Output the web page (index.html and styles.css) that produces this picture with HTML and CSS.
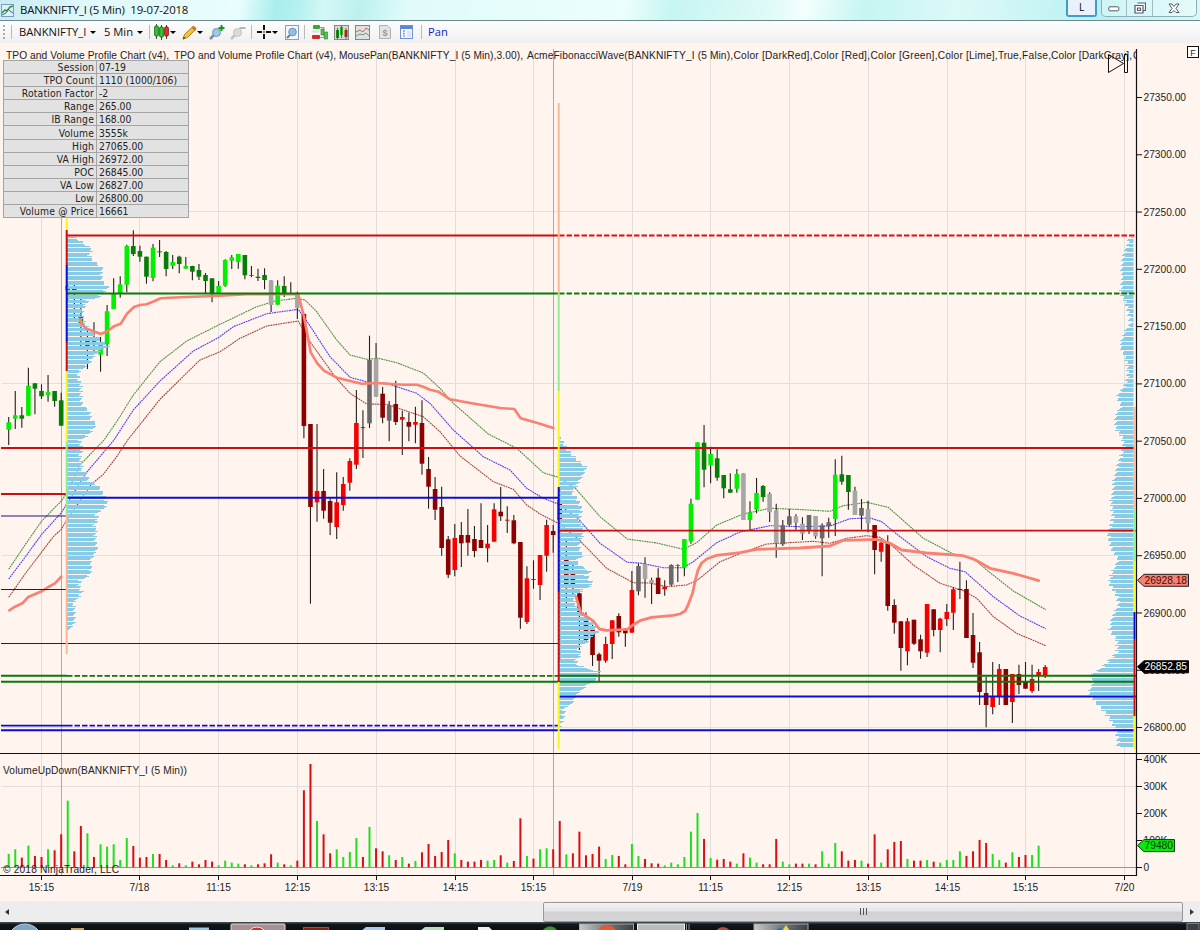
FILE: index.html
```html
<!DOCTYPE html>
<html lang="en">
<head>
    <meta charset="UTF-8">
    <title>BANKNIFTY_I (5 Min) 19-07-2018</title>
    <link rel="stylesheet" href="styles.css">
</head>
<body>
    <div class="titlebar">
        <svg class="app-icon" width="13" height="13" viewBox="0 0 13 13">
            <rect x=".5" y=".5" width="12" height="12" fill="#dfeef8" stroke="#7d9bbb"/>
            <path d="M1 9l3-3 2 1 3-4 3-1" fill="none" stroke="#2b9a3d" stroke-width="1.5"/>
            <path d="M1 11l4-2 2-4 2 2 3 2" fill="none" stroke="#3767b0"/>
        </svg>
        <span class="title">BANKNIFTY_I (5 Min)&nbsp; 19-07-2018</span>
        <span class="link-btn">L</span>
        <div class="win-buttons">
            <span class="wb min"><svg width="12" height="6"><rect x=".8" y=".8" width="10" height="4" rx="1" fill="#fff" stroke="#555b66"/></svg></span>
            <span class="wb max"><svg width="12" height="12"><path d="M3.500 1h8v7.500h-2M1 3.500h8v7.500h-8zM3.500 6h3v2.500h-3z" fill="#fff" stroke="#555b66" stroke-width="1.200"/></svg></span>
            <span class="wb close"><svg width="12" height="11"><path d="M1 1h3l2 2.500 2-2.500h3l-3 4.500 3 4h-3l-2-2-2 2h-3l3-4z" fill="#fff" stroke="#555b66"/></svg></span>
        </div>
    </div>

    <div class="toolbar">
        <span class="grip"></span>
        <span class="sep s1"></span>
        <span class="tool-text instrument">BANKNIFTY_I</span>
        <i class="caret c1"></i>
        <span class="tool-text interval">5 Min</span>
        <i class="caret c2"></i>
        <span class="sep s2"></span>
        <svg class="ic i1" width="15" height="16" viewBox="0 0 15 16">
            <path d="M2.500 0v15M7.500 1v15M12.500 1v14" stroke="#444"/>
            <rect x=".7" y="2" width="3.600" height="10" rx="1" fill="#35c931" stroke="#157615"/>
            <rect x="5.700" y="3" width="3.600" height="10" rx="1" fill="#35c931" stroke="#157615"/>
            <rect x="10.700" y="3" width="3.600" height="9" rx="1" fill="#e5382c" stroke="#8c1913"/>
        </svg>
        <i class="caret c3"></i>
        <svg class="ic i2" width="15" height="15" viewBox="0 0 15 15">
            <path d="M1 14l1.500-4.500L11 1.500l3 2.500-8.500 8.500z" fill="#f5c634" stroke="#a97b13"/>
            <path d="M10 2.500l3 3M1 14l1-2 1 1z" stroke="#7b5a20"/>
            <path d="M11 1.500l3 2.500" stroke="#d26a67" stroke-width="2"/>
        </svg>
        <i class="caret c4"></i>
        <svg class="ic i3" width="16" height="15" viewBox="0 0 16 15">
            <path d="M1 14l4-4" stroke="#7c8ba0" stroke-width="2.500"/>
            <circle cx="7.500" cy="7.500" r="4" fill="#9ccae8" stroke="#7693af"/>
            <path d="M12.500 0v6M9.500 3h6" stroke="#169324" stroke-width="2"/>
        </svg>
        <svg class="ic i4" width="16" height="15" viewBox="0 0 16 15">
            <path d="M1 14l4-4" stroke="#c2c2c2" stroke-width="2.500"/>
            <circle cx="7.500" cy="7.500" r="4" fill="#dadada" stroke="#c3c3c3"/>
            <path d="M9.500 3h6" stroke="#b3b3b3" stroke-width="2"/>
        </svg>
        <span class="sep s3"></span>
        <svg class="ic i5" width="14" height="14" viewBox="0 0 14 14">
            <path d="M7 0v5M7 9v5M0 7h5M9 7h5M6.500 7h1" stroke="#111" stroke-width="2"/>
        </svg>
        <i class="caret c5"></i>
        <svg class="ic i6" width="14" height="15" viewBox="0 0 14 15">
            <rect x=".5" y=".5" width="13" height="14" fill="#f4f7fb" stroke="#8e9cb4"/>
            <path d="M2 13l3-3" stroke="#6b7b90" stroke-width="2"/>
            <circle cx="7.500" cy="7" r="3.800" fill="#93c1e3" stroke="#6c8fb4"/>
        </svg>
        <span class="sep s4"></span>
        <svg class="ic i7" width="16" height="15" viewBox="0 0 16 15">
            <path d="M7 2.500h5v3M0 12.500h12v-3" fill="none" stroke="#9a9a9a"/>
            <rect x="1" y="0" width="7" height="4" rx="1" fill="#39a935"/>
            <rect x="0" y="5.500" width="7" height="2" rx="1" fill="#ddd"/>
            <rect x="0" y="10" width="8" height="4" rx="1" fill="#cc2f2b"/>
            <rect x="9" y="4" width="3" height="6" fill="#53c545" stroke="#2b7c2a" stroke-width=".6"/>
            <rect x="12.500" y="7" width="3" height="7" fill="#53c545" stroke="#2b7c2a" stroke-width=".6"/>
        </svg>
        <svg class="ic i8" width="15" height="15" viewBox="0 0 15 15">
            <rect x=".5" y=".5" width="14" height="14" fill="#d5dad2" stroke="#868686"/>
            <rect x="2" y="5" width="3" height="8" fill="#238c23"/>
            <rect x="6" y="2" width="3" height="8" fill="#35b931"/>
            <rect x="10.500" y="5" width="3" height="7" fill="#bd2a22"/>
            <path d="M3.500 3v11M7.500 1v12M12 3v11" stroke="#333" stroke-width=".7"/>
        </svg>
        <svg class="ic i9" width="15" height="15" viewBox="0 0 15 15">
            <rect x=".5" y=".5" width="14" height="14" fill="#dde3de" stroke="#868686"/>
            <path d="M1 7l4-2 3 2 3-4 3 2" fill="none" stroke="#c86464"/>
            <path d="M1 11l4-2 3 1 3-2 3 3" fill="none" stroke="#5f9c70"/>
        </svg>
        <svg class="ic i10" width="12" height="14" viewBox="0 0 12 14">
            <path d="M.5.500h8l3 3v10H.5z" fill="#e4e4e4" stroke="#b0b0b0"/>
            <text x="6" y="11" class="dollar">$</text>
        </svg>
        <svg class="ic i11" width="13" height="14" viewBox="0 0 13 14">
            <rect x=".5" y=".5" width="12" height="13" fill="#f3f7ff" stroke="#6f8fd0"/>
            <path d="M1 2.500h11" stroke="#5b84d8" stroke-width="3"/>
            <path d="M3 6h2M3 8.500h2M3 11h2" stroke="#7e9cdc" stroke-width="1.400"/>
            <path d="M7 6h4v6H7z" fill="#d8e4fb"/>
        </svg>
        <span class="sep s5"></span>
        <span class="tool-text pan">Pan</span>
    </div>

    <div class="chart">
        <svg id="plot" width="1200" height="858" viewBox="0 43 1200 858"></svg>
        <table class="session-box">
            <tr><th>Session</th><td>07-19</td></tr>
            <tr><th>TPO Count</th><td>1110 (1000/106)</td></tr>
            <tr><th>Rotation Factor</th><td>-2</td></tr>
            <tr><th>Range</th><td>265.00</td></tr>
            <tr><th>IB Range</th><td>168.00</td></tr>
            <tr><th>Volume</th><td>3555k</td></tr>
            <tr><th>High</th><td>27065.00</td></tr>
            <tr><th>VA High</th><td>26972.00</td></tr>
            <tr><th>POC</th><td>26845.00</td></tr>
            <tr><th>VA Low</th><td>26827.00</td></tr>
            <tr><th>Low</th><td>26800.00</td></tr>
            <tr><th>Volume @ Price</th><td>16661</td></tr>
        </table>
    </div>

    <div class="scrollbar">
        <i class="arrow left"></i>
        <div class="thumb"><i></i><i></i><i></i></div>
        <i class="arrow right"></i>
    </div>

    <div class="taskbar">
        <svg width="1200" height="8" viewBox="0 922 1200 8">
            <defs>
                <linearGradient id="btn" x1="0" x2="1"><stop offset="0" stop-color="#c9c9cc"/><stop offset=".5" stop-color="#77797e"/><stop offset="1" stop-color="#3c4046"/></linearGradient>
            </defs>
            <circle cx="25" cy="941" r="17" fill="#7fa6c6" stroke="#b9d1e2"/>
            <rect x="71" y="928" width="13" height="3" fill="#d9a05c"/>
            <rect x="189" y="927.500" width="20" height="3" fill="#9cc8e8"/>
            <rect x="231" y="924" width="54" height="8" rx="1" fill="#a98f92" stroke="#e4dcdc"/>
            <circle cx="257" cy="937" r="10" fill="#d6302d" stroke="#f5dcdc"/>
            <rect x="303.500" y="927.500" width="25" height="6" fill="#8c1b10" stroke="#d63b20"/>
            <path d="M361 931l5-4h19v4z" fill="#a9ccf2"/>
            <path d="M420 931l5-4h19v4z" fill="#b5dfb4"/>
            <path d="M478 931v-4h11l4 4z" fill="#eee"/>
            <circle cx="550" cy="935" r="8.500" fill="#2f9c2b" stroke="#205f1d" stroke-dasharray="2 2"/>
            <rect x="579.500" y="924" width="54" height="8" fill="url(#btn)" stroke="#aaa"/>
            <circle cx="607" cy="935" r="10" fill="#ec5530"/>
            <rect x="637.500" y="924" width="47" height="8" fill="#b9bbbd" stroke="#eee"/>
            <path d="M686.500 924v6M689 924v6" stroke="#8a8d91"/>
            <circle cx="723" cy="936" r="9" fill="#c74242"/>
            <rect x="754" y="924" width="54" height="8" fill="url(#btn)" stroke="#aaa"/>
            <path d="M775 931l5-3.500 5 3.500z" fill="#2b6bc0"/>
            <path d="M782 931l4-6 4 6z" fill="#f2d73b"/>
            <rect x="1187" y="923.500" width="12" height="8" fill="#3a3f46" stroke="#7b8087"/>
        </svg>
    </div>
    <script src="chart.js"></script>
</body>
</html>
```

FILE: styles.css
```css
body {
    margin: 0;
    width: 1200px;
    height: 930px;
    overflow: hidden;
    background-color: #fff4ee;
    font-family: "Open Sans", "Noto Sans", sans-serif;
}

.titlebar {
    display: flex;
    align-items: center;
    box-sizing: border-box;
    height: 21px;
    border-bottom: 1px solid #6d8b8d;
    background: linear-gradient(100deg, #c9eaf2 0, #dff8fb 7%, #e9fdfd 20%, #a9eeee 23%, #b5f1ef 25%, #d3f8f6 27%, #bdf1ee 30%, #e0fbfa 34%, #ecfefd 52%, #c7f5f1 56%, #dffaf8 64%, #f3fffe 67%, #c6f5f2 72%, #dcf9f8 80%, #b9f0f2 92%, #d8f9f8 100%);
}

.app-icon {
    margin: 0 6px 0 1px;
}

.title {
    width: 1046px;
    font-size: 11.4px;
    letter-spacing: -0.16px;
    line-height: 20px;
    color: #111;
    white-space: nowrap;
}

.link-btn {
    box-sizing: border-box;
    align-self: flex-start;
    width: 31px;
    height: 17px;
    border: 2px solid #3f9ccb;
    border-top: 0;
    border-radius: 0 0 3px 3px;
    background-color: #e9f2fb;
    font-size: 10px;
    line-height: 15px;
    text-align: center;
}

.win-buttons {
    display: flex;
    align-self: flex-start;
    box-sizing: border-box;
    width: 96px;
    height: 17px;
    margin-left: 4px;
    border: 1px solid #8fb0b4;
    border-top: 0;
    border-radius: 0 0 5px 5px;
    background-color: rgba(255, 255, 255, 0.35);
}

.wb {
    display: flex;
    align-items: center;
    justify-content: center;
    width: 25px;
}

.wb.min {
    border-right: 1px solid #9fbcc0;
    padding-top: 2px;
}

.wb.max {
    border-right: 1px solid #9fbcc0;
}

.wb.close {
    width: 44px;
}

.toolbar {
    display: flex;
    align-items: center;
    height: 22px;
    background: linear-gradient(#fdfdfd, #f0f0f1);
}

.grip {
    width: 2px;
    height: 14px;
    margin-left: 3px;
    background: repeating-linear-gradient(#aaa 0 2px, transparent 2px 4px);
}

.sep {
    width: 1px;
    height: 14px;
    background-color: #bbb;
}

.tool-text {
    font-size: 11.2px;
    line-height: 20px;
    color: #111;
    white-space: nowrap;
}

.caret {
    border: 3px solid transparent;
    border-top-color: #000;
    border-bottom: 0;
}

.ic {
    flex: none;
}

.s1 { margin-left: 6px; }
.instrument { margin-left: 7px; width: 67px; }
.c1 { margin-left: 4px; }
.interval { margin-left: 8px; width: 29px; }
.c2 { margin-left: 4px; }
.s2 { margin-left: 6px; }
.i1 { margin-left: 4px; }
.c3 { margin-left: 1px; }
.i2 { margin-left: 6px; }
.c4 { margin-left: 0; }
.i3 { margin-left: 6px; }
.i4 { margin-left: 5px; }
.s3 { margin-left: 5px; }
.i5 { margin-left: 5px; }
.c5 { margin-left: 1px; }
.i6 { margin-left: 7px; }
.s4 { margin-left: 5px; }
.i7 { margin-left: 7px; }
.i8 { margin-left: 6px; }
.i9 { margin-left: 6px; }
.i10 { margin-left: 9px; }
.i11 { margin-left: 9px; }
.s5 { margin-left: 8px; }
.pan { margin-left: 6px; color: #1818d0; }

.dollar {
    font: bold 9px "Liberation Sans", sans-serif;
    text-anchor: middle;
    fill: #999;
}

.chart {
    position: relative;
    height: 858px;
}

#plot {
    display: block;
    font-family: "Liberation Sans", Arial, sans-serif;
    font-size: 10.2px;
    fill: #222;
}

/* info box lies over the price pane */
.session-box {
    position: absolute;
    left: 3px;
    top: 17px;
    width: 186px;
    border-collapse: collapse;
    table-layout: fixed;
    background-color: #e2e2e2;
    font-family: "DejaVu Sans Condensed", "DejaVu Sans", sans-serif;
    font-stretch: condensed;
    font-size: 10.3px;
    line-height: 12px;
    color: #222;
}

.session-box th,
.session-box td {
    height: 12.1px;
    padding: 0 2px;
    border: 1px solid #a4a4a4;
    font-weight: normal;
    white-space: nowrap;
}

.session-box th {
    width: 88px;
    text-align: right;
    letter-spacing: 0.15px;
}

.session-box td {
    text-align: left;
}

.scrollbar {
    display: flex;
    align-items: center;
    height: 21px;
    background-color: #ededed;
}

.arrow {
    border: 3px solid transparent;
}

.arrow.left {
    margin-left: 2px;
    border-right: 4px solid #333;
}

.arrow.right {
    margin-left: 7px;
    border-left: 4px solid #333;
}

.thumb {
    display: flex;
    align-items: center;
    justify-content: center;
    gap: 2px;
    box-sizing: border-box;
    width: 640px;
    height: 20px;
    margin-left: 534px;
    border: 1px solid #999;
    border-radius: 2px;
    background: linear-gradient(#f2f2f2 0, #e6e6e7 45%, #d1d1d3 50%, #d6d6d8 100%);
}

.thumb i {
    width: 1px;
    height: 7px;
    background-color: #555;
}

.taskbar {
    height: 8px;
    background: linear-gradient(#4d555c, #10171c 30%, #0a0f13);
}

.taskbar svg {
    display: block;
}
```

FILE: chart.js
```javascript
const plot = document.getElementById('plot');
let out = '';

const STEP = 6.56;
const barX = i => 8.7 + STEP * i;

const line = (x1, y1, x2, y2, color, w = 1, extra = '') => {
    out += `<line x1="${x1}" y1="${y1}" x2="${x2}" y2="${y2}" stroke="${color}" stroke-width="${w}" ${extra}/>`;
};
const rect = (x, y, w, h, color, extra = '') => {
    out += `<rect x="${x}" y="${y}" width="${w}" height="${h}" fill="${color}" ${extra}/>`;
};
const text = (x, y, str, extra = '') => {
    out += `<text x="${x}" y="${y}" ${extra}>${str}</text>`;
};

// grid
const times = [[41.5, '15:15'], [139.5, '7/18'], [218.5, '11:15'], [297.5, '12:15'], [376.5, '13:15'], [455.5, '14:15'], [533.5, '15:15'],
    [632.5, '7/19'], [710.5, '11:15'], [789.5, '12:15'], [868.5, '13:15'], [947.5, '14:15'], [1025.5, '15:15'], [1124.5, '7/20']];
times.forEach(t => line(t[0], 49, t[0], 875, '#e0dddb'));
[211.5, 383.5, 555.5, 727.5, 786.5].forEach(y => line(2, y, 1136, y, '#e3dfdd'));
line(61.5, 218, 61.5, 875, '#aba9b0');
line(553.5, 49, 553.5, 875, '#aba9b0');

// moving averages
const poly = (pts, color, w, extra = '') => {
    out += `<polyline points="${pts}" fill="none" stroke="${color}" stroke-width="${w}" ${extra}/>`;
};
const dots = 'stroke-dasharray="1.8 .7"';
[
    '8.7,569.3 25,545 41.7,521 61.3,501 66.7,493.3 80,465 104,440 116.7,421.7 133.3,395 160,361.7 186.7,341 220,324.3 256.7,306.7 275,301 297,298.3 305,300 316.7,311.7 336.7,340 350,355 366.7,359.3 378.3,358.3 396.7,362.7 423.3,373 440,388.3 453.3,403.3 488.3,434 516.7,448.3 543.3,472.7 558.3,477.3 576,489 600,516.7 627.3,539 656.7,543 683.3,549.3 696.7,542.7 716.7,525 743.3,514 770,508.3 800,509.5 830,511.3 843.3,505.7 866.7,502.3 888.3,507.3 923.3,538.3 953.3,554 973.3,558.3 986.7,570 1013.3,591 1045.7,609.7',
    '8.7,579 26.7,555 41.7,534.3 61.3,512.7 66.7,504 86.7,472.3 114,440 133.3,410 160,381 193.3,351 218.3,337.7 233.3,326.7 266.7,313.7 298.3,309.3 308.3,323.3 330,356.7 350,377.3 368.3,382.3 386.7,383.3 416.7,393.3 430,403.3 453.3,430 483.3,456.7 510,470 526.7,488.3 543.3,498.3 558.3,504 579.3,520 600,543.3 627.3,562.3 640,563 663.3,567.7 683.3,567.7 693.3,561.7 716.7,542.7 740,532 770,525.7 800,526.7 830,526 850,518.7 870,518 881.7,521.7 900,536.7 926.7,556.7 950,568.3 965,571.7 993.3,596.7 1020,616 1045.7,628.7',
    '8.7,597.3 26.7,571.7 53.3,536.7 61.3,529.3 66.7,520 91.7,484 103.3,474.3 116.7,456.7 127.7,440 160,399.3 200,360 220,351.7 240,338.3 266.7,326 298.3,321 310,341.7 335,376.7 350,393.3 366.7,404 386.7,404.3 423.3,416.7 440,431.7 460,456 493.3,481.7 513.3,489.3 526.7,505 540,514 558.3,523.3 579.3,540 606.7,568.3 633.3,582.7 650,583 666.7,586.7 686.7,585 696.7,580.7 720,561.7 743.3,552.3 766.7,544 813.3,541.3 830,543.3 846.7,538.3 866.7,535.7 880,537.3 893.3,546.7 913.3,565 940,583.3 963.3,590.7 976.7,598.3 993.3,616.7 1016.7,633.3 1045.7,645.7'
].forEach((pts, i) => poly(pts, ['#4c8f3c', '#4a3df0', '#a3443a'][i], 1.1, dots));

// candles: high, body top, body bottom, low, colour
// L lime, G green, R red, D dark red, A light gray, M dim gray
const colors = { L: '#00f000', G: '#067d06', R: '#f80000', D: '#8b0000', A: '#a6a6a6', M: '#696969' };
const candles = `417 422.3 429.7 445 L|391 415.3 418.7 429 L|407 415.3 418.7 427.7 G|367.7 385.7 415.7 415.7 L|383.3 383.3 388.7 414.3 G|384.3 391 396.3 399 G|375 392 395.3 401.7 L|391 391 401 406.7 G|392.7 400.3 425.7 425.7 G|
283 286 290 300 G|283 288 292 320 G|295 316 325 350 G|330 340 350 369 G|322.3 338 341.7 351 G|337 342.7 354.7 371.7 L|305 311.3 344.3 356 L|278.3 293.3 309 309 L|276.3 284.3 293.3 297.7 L|244.7 246 284.7 292.3 L|230.3 246 254 256 G|
245.7 251 256.7 261.7 G|256.7 256.7 276.7 283.7 G|244 247.7 278 281.3 L|240 251.3 252.3 257 G|251 252 269 276.3 G|255 262 265.7 269 L|255.7 256.7 264 273.3 G|257 266 268.7 268.7 L|265.7 266 271.7 280.3 G|264 270 276.7 280 G|
273 275 281 293.3 G|278.3 278.3 293.3 302.3 G|281 286 293.3 293.3 L|259.3 260 285.7 287 L|255 257.3 260.7 269 L|254 254 262 268.7 L|255 255 275.3 279.3 G|266 275 275.7 277.3 G|268.7 276.7 278 281 G|268.3 275 280 289.3 G|
280.3 280.3 305 312 A|280.3 285.7 304.7 304.7 L|276.3 286 293.7 297 G|282.3 293 294 294 G|291.7 293 308 319 A|313.3 314 426 438.3 D|424 424 507 603.7 D|424 491 502.3 521.7 R|469 491 510.7 518.7 D|498.3 501 522.7 535 D|
472.3 502.3 527 539 R|477 484 505 510.7 R|458.3 461 482.7 490.7 R|390 423 464.7 469 R|410.3 427.3 428 458 D|335.7 360 423.3 428 M|343 358.3 396.7 396.7 A|387 393.7 417.7 423.3 D|401 405.3 420.7 441.3 M|380.7 404 422 425 D|
410.7 417 419.7 455 R|412.7 422 426.7 441.3 D|406.7 422 424.7 443.3 R|400.3 423 463.7 474.7 D|457 469 486.7 508.7 D|477 489 509.7 520 D|486.7 507 548 555.7 D|536 539.3 574.7 578 D|524 538 570 576.3 R|522 535 543.3 567 D|
509 535 542.7 555.7 D|526 539 551 557.3 D|503.3 540 548 548 D|525 543.7 548.3 562.3 R|503.3 509.3 541.7 541.7 R|487 511.7 516.3 521 D|506.3 519.7 520.7 533 R|515 520.3 543.3 544.3 D|542 542 617.7 628.7 D|566.3 578.3 622 624 R|
560.3 579 579.7 588.7 D|555 555 585 600 R|519.7 525 555.7 571.7 R|525 531 535 552.7 D|488 500 520 660 D|540 560 585 610 D|561 572 587 595 D|590 593.3 613 650 D|612.3 620 640 642.7 D|619.3 628 655 666 D|
652.7 654.3 660.7 681 D|636.7 644 660.7 662.7 R|620.3 620.3 644 659 R|613.3 616 632.3 636.7 D|628 629.7 633.3 646.7 D|571 590 632.7 632.7 R|563.3 566 591.3 595.3 M|557.3 564 579 597.7 A|577.7 580 583.3 604 A|568.3 577.7 594 594 D|
580.3 586.7 589.3 595.7 R|564.3 565 584.7 586 M|564.3 565 565.5 582 M|539 539 567.7 576.3 L|498.7 503.7 541.3 543.7 L|442.3 442.3 499.7 499.7 L|425 442.7 469.7 487.3 G|446.7 454 465.3 483.3 L|449.3 458.3 477.7 480.7 G|475 475 488.3 498.3 G|
473.3 489.3 492.7 492.7 G|469 474 488.7 492.7 L|473.3 473.3 520 520 A|501.3 512.3 520 529.7 L|478 493 509.7 513.3 L|485 486 497 501.7 G|492.3 494 512.3 522 A|503.7 510.3 543.3 557.7 A|520 525.3 544.3 546 M|509 516.3 524.7 526 M|
514.3 516.3 522.7 529.7 A|517.3 523.7 533.7 540 A|515 515 530 534 M|516 516 536.3 538.7 A|523.3 525.3 538.3 576.3 M|517.7 522.3 526 537.7 M|459.3 474.7 519 536 L|455.7 474.3 481.7 484.7 G|475 475 492 509.7 G|486.7 490.7 515 515 A|
499 508 515.7 529.7 M|500.7 509 523.3 532.3 A|525 525 550 574.3 D|538.7 542.7 551.7 561.7 R|535.3 542.7 606 610.7 D|599.3 605 622.7 633.7 D|621.3 621.3 648 670.7 D|618 621.3 651.3 665.3 R|619.7 619.7 643.7 645 D|634.7 639.3 651.3 658.7 D|
604 604 652.7 657 R|609.3 609.3 630 636.3 D|617.7 618.7 630 652.3 R|604 612 619 626 R|587 589.3 612.7 630 R|561.7 589 590 599 D|580.3 589 638 638 D|613 635 662.7 668 D|642 652.3 692 705 D|676.7 693 705 727.3 D|
662 696.7 707 714.3 R|664 669 696.7 705 R|669 669 705 705 D|674 674 702 723 R|664.7 674 685 694 D|662 682 688.7 688.7 D|664.7 679 691 693 R|669 672 675 691 R|665 667 675 678 R`;
candles.replace(/\n/g, '').split('|').forEach((c, i) => {
    const [hi, top, bot, lo, col] = c.split(' ');
    const x = barX(i);
    line(x, hi, x, lo, '#26201e', 1.1);
    rect(x - 2.3, top, 4.6, Math.max(bot - top, 0.8), colors[col]);
});

// volume profiles: [y, outer edge x], rows of four pixels with a thin gap
const profile = (base, pts) => {
    let d = '';
    for (let k = 0; k < pts.length - 1; k++) {
        const [y0, x0] = pts[k], [y1, x1] = pts[k + 1];
        for (let y = Math.ceil(y0); y < y1; y++) {
            if (y % 14 === 0 || y % 14 === 5 || y % 14 === 9) continue;
            const n = ((y * 7919) % 5 - 2) * 0.9;
            const x = Math.round(x0 + (x1 - x0) * (y - y0) / (y1 - y0) + n);
            d += `M${base} ${y + 0.5}H${x}`;
        }
    }
    out += `<path d="${d}" stroke="#87cbe7" stroke-width="1.15"/>`;
};
profile(67, [[237, 75], [243, 84], [249, 92], [255, 89], [262, 96], [268, 103], [275, 101], [281, 102], [287, 108], [290, 105], [297, 98], [300, 88], [308, 83], [317, 82], [325, 86], [332, 93], [340, 102], [346, 108], [350, 100], [356, 93], [362, 90], [368, 83], [372, 78], [380, 79], [385, 81], [395, 81], [405, 83], [411, 90], [418, 90], [424, 96], [430, 92], [436, 86], [440, 80], [448, 82], [455, 80], [463, 82], [469, 82], [475, 88], [480, 89], [485, 98], [492, 102], [497, 105], [504, 107], [510, 102], [513, 95], [518, 98], [525, 94], [530, 97], [535, 95], [540, 96], [549, 98], [553, 94], [560, 90], [570, 91], [575, 89], [580, 80], [587, 79], [591, 82], [598, 78], [602, 73], [608, 75], [622, 75], [626, 71], [630, 69]]);
profile(559, [[437, 560], [442, 563], [448, 566], [455, 573], [462, 580], [467, 587], [473, 584], [480, 580], [486, 576], [492, 571], [498, 577], [505, 580], [510, 582], [514, 580], [520, 580], [527, 583], [533, 583], [540, 581], [545, 579], [551, 581], [555, 583], [560, 575], [565, 580], [571, 590], [575, 586], [580, 590], [584, 593], [588, 585], [593, 578], [598, 574], [605, 576], [612, 583], [618, 590], [623, 593], [628, 595], [632, 598], [637, 590], [642, 587], [648, 577], [654, 581], [660, 576], [664, 577], [668, 587], [672, 603], [675, 595], [680, 597], [684, 588], [690, 582], [694, 577], [700, 573], [704, 571], [707, 564], [713, 564], [720, 562], [727, 560]]);
profile(1133.5, [[237, 1130], [246, 1127], [258, 1123], [272, 1122], [285, 1121], [293, 1120], [297, 1123], [306, 1127], [323, 1131], [328, 1127], [335, 1124], [346, 1120], [353, 1123], [363, 1127], [375, 1128], [385, 1125], [396, 1117], [406, 1122], [415, 1115], [427, 1115], [437, 1122], [447, 1124], [458, 1120], [468, 1117], [485, 1113], [502, 1111], [516, 1113], [525, 1111], [531, 1108], [538, 1109], [551, 1113], [559, 1118], [571, 1112], [583, 1109], [595, 1117], [604, 1119], [616, 1113], [630, 1109], [640, 1117], [652, 1117], [662, 1107], [669, 1100], [676, 1088], [680, 1095], [692, 1089], [702, 1095], [712, 1105], [723, 1113], [737, 1118], [748, 1118]]);

// VWAP
const round = 'stroke-linejoin="round" stroke-linecap="round"';
poly('9.3,610.3 15,606.7 22.3,603.3 28.3,597 41.7,591.3 48.3,587 55,583.3 61.3,576.7', '#fa8072', 2.6, round);
poly('80,319 81.7,324.3 86.7,328.7 100.7,334 107.3,331.3 114,326.3 120.7,323.7 127,313.7 134,307 140,305 146.7,304.3 154,301.3 160.7,298.3 180,297.3 220,295.7 246.7,294.3 298.3,294.3 304,316.7 310.7,352.3 317.3,363.3 324,370.7 336.7,377.7 361.7,383.7 376.7,383 403.3,384.7 416.7,384.7 423.3,386.7 430,389.7 438.3,391.7 450,399.3 471.7,403.3 500,408 514.3,409 520.7,418.3 538.3,423.3 553.3,428', '#fa8072', 2.6, round);
poly('576,596.7 580.7,612.7 593.3,621 599.3,629 606.7,630.3 627.3,629.3 633.3,624.7 640,620.7 651.7,617.3 673.3,615.3 680,614 685.3,610.7 688.3,604.3 692.7,592.7 695.3,580 698,570 701.7,563 706.7,559 716.7,555.3 740,552.7 756.7,549.3 800,548 830,546 843.3,540.3 876.7,539.3 890,543.3 901.7,550 926.7,553 963.3,555.7 975,559.7 990,568.3 1013.3,573.3 1038.7,580.7', '#fa8072', 2.8, round);

// levels
const RED = '#cc0d12', GREEN = '#087a08', BLUE = '#0c0cd4', NAVY = '#1c1488';
const dash = 'stroke-dasharray="5.500 2"';
line(67, 235.5, 559, 235.5, RED, 1.8);
line(559, 235.5, 1136, 235.5, '#e00c10', 1.8, dash);
line(67, 293.5, 559, 293.5, GREEN, 1.8);
line(559, 293.5, 1136, 293.5, GREEN, 1.8, dash);
line(1, 448, 1134, 448, RED, 1.8);
line(1, 494, 67, 494, RED, 1.8);
line(1, 516, 67, 516, NAVY, 1.1);
line(1, 589.5, 67, 589.5, NAVY, 1.1);
line(1, 643.5, 559, 643.5, NAVY, 1.1);
line(67, 497.7, 559, 497.7, BLUE, 1.9);
line(559, 530.7, 1136, 530.7, RED, 1.8);
line(1, 675.8, 67, 675.8, GREEN, 2);
line(67, 675.8, 559, 675.8, GREEN, 1.8, dash);
line(559, 675.8, 1136, 675.8, GREEN, 2);
line(1, 681.7, 1134, 681.7, GREEN, 2);
line(1, 725.6, 67, 725.6, BLUE, 1.8);
line(67, 725.6, 559, 725.6, BLUE, 1.8, dash);
line(1, 730.3, 1134, 730.3, BLUE, 1.9);
line(559, 696.5, 1136, 696.5, BLUE, 1.8);

// session range bars
const spine = (x, stops) => {
    for (let k = 0; k < stops.length - 1; k++) {
        line(x, stops[k][0], x, stops[k + 1][0], stops[k][1], 2);
    }
};
const YEL = '#f7f71a', SAL = '#fcb796', LGR = '#90ee90';
spine(66.7, [[218, YEL], [230, RED], [265, BLUE], [342, RED], [371, YEL], [442, LGR], [514, SAL], [654]]);
spine(558.7, [[103, SAL], [293, LGR], [391, YEL], [487, BLUE], [592, RED], [682, YEL], [749]]);
spine(1134.5, [[407, SAL], [510, LGR], [561, YEL], [612, BLUE], [639, RED], [716, YEL], [749]]);

// volume pane, negative = down bar
const volume = [40, 54, -29, 65, -34, -31, 54, -51, -99, 200, -48, -124, 102, -31, 69, 62, 69, 22, 88, -64, -29, -31, 40, -40, -22, 6, -12, 6, -17, -9, -22, -17, 6, 20, 14, 11, -9, 6, -9, -12, -39, 14, -9, 6, -20, -231, -310, 139, -99, -42, 54, 31, 46, 88, -31, 121, -57, -48, 36, -22, 31, -11, 19, -45, -70, -34, -46, -82, 42, -22, -17, -17, -22, 20, 22, -36, 14, -19, -147, 34, -26, 54, 57, -54, -139, 39, -42, -107, -36, -40, -62,
    25, 37, -34, -9, 70, 34, -25, -12, -11, 6, 14, 9, 31, 107, 163, -85, 28, -23, -25, -17, 11, -42, 29, 14, -9, -9, -85, 17, 9, -11, -11, 11, -9, 48, 11, 73, -48, -20, -22, 20, -11, -99, 14, -54, -76, -79, 25, -20, -20, 22, -17, 14, 22, 22, 48, -34, -48, -82, -73, 40, 22, -14, 45, -31, -37, 37, 65];
line(1, 867.5, 1136, 867.5, '#9b9592');
volume.forEach((v, i) => {
    const h = Math.abs(v) / 3;
    rect(barX(i) - 1, 867.3 - h, 2, h, v > 0 ? '#1fe01f' : '#d80f12');
});

// axes
line(0, 753.5, 1200, 753.5, '#111', 1);
line(1136.5, 49, 1136.5, 876, '#111', 1.2);
line(0, 875.5, 1137, 875.5, '#111', 1.2);
times.forEach(t => {
    line(t[0], 875, t[0], 880, '#111');
    text(t[0], 890.5, t[1], 'text-anchor="middle"');
});
for (let p = 27350; p >= 26800; p -= 50) {
    const y = 97.5 + (27350 - p) * 1.1455;
    line(1137, y, 1142, y, '#111');
    text(1143.5, y + 3.6, p + '.00', 'textLength="42.5"');
}
['400K', '300K', '200K', '100K', '0'].forEach((s, i) => {
    line(1137, 759.5 + i * 27, 1142, 759.5 + i * 27, '#111');
    text(1143.5, 763 + i * 27, s);
});

// price markers
const marker = (y, fill, stroke, color, str, right) => {
    out += `<path d="M1137.500 ${y}L1144 ${y - 6}H${right}V${y + 6}H1144Z" fill="${fill}" stroke="${stroke}"/>`;
    text(1144.5, y + 3.6, str, `fill="${color}" textLength="${right - 1146}"`);
};
marker(580.3, '#fa8072', '#222', '#3a0d08', '26928.18', 1188.5);
marker(666.8, '#000', '#000', '#fff', '26852.85', 1188.5);
marker(845.6, '#0be80b', '#053f05', '#073307', '79480', 1174.5);

// captions
out += '<clipPath id="cap"><rect x="0" y="44" width="1136" height="20"/></clipPath><g clip-path="url(#cap)">';
[
    [6, 'TPO and Volume Profile Chart (v4),', 163],
    [174, 'TPO and Volume Profile Chart (v4),', 162],
    [339, 'MousePan(BANKNIFTY_I (5 Min),3.00),', 184],
    [527, 'AcmeFibonacciWave(BANKNIFTY_I (5 Min),', 206],
    [733.5, 'Color [DarkRed],', 79],
    [813, 'Color [Red],', 57],
    [870.5, 'Color [Green],', 67],
    [937.7, 'Color [Lime],', 60],
    [998, 'True,', 23.5],
    [1022, 'False,', 29],
    [1051, 'Color [DarkGray],', 81],
    [1133, 'Color', 26]
].forEach(c => text(c[0], 59, c[1], `textLength="${c[2]}"`));
out += '</g>';
text(3, 773.5, 'VolumeUpDown(BANKNIFTY_I (5 Min))', 'textLength="184"');
text(3, 873, '© 2018 NinjaTrader, LLC', 'textLength="116"');

// go-to-last-bar and F buttons
out += '<path d="M1108.500 54.500v18l15-9zM1124.500 54.500h3v18h-3z" fill="none" stroke="#111"/>';
out += '<rect x="1187.500" y="46.500" width="11" height="11" fill="#fff" stroke="#111"/>';
text(1193, 55.5, 'F', 'text-anchor="middle" font-size="9"');

plot.innerHTML = out;
```
